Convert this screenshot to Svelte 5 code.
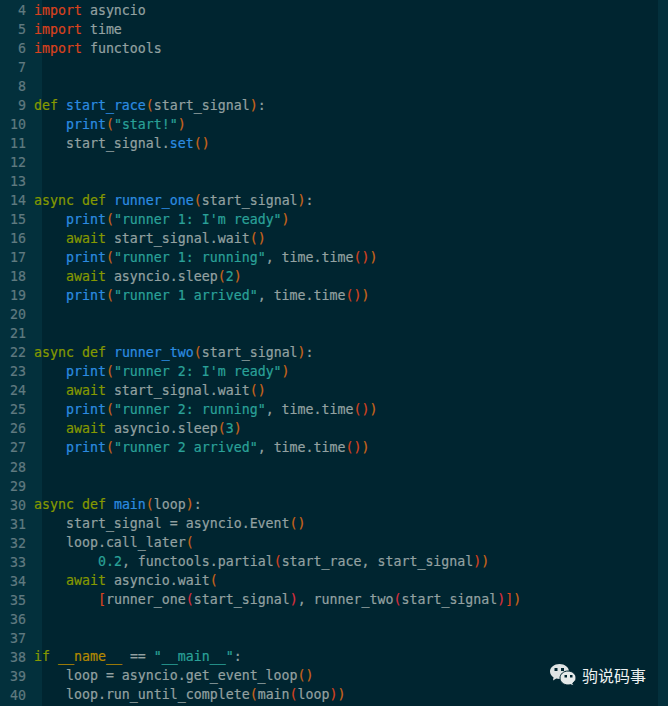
<script>
  const k = (t) => ['kw', t];
  const r = (t) => ['red', t];
  const f = (t) => ['fn', t];
  const s = (t) => ['str', t];
  const o = (t) => ['or', t];
  const rd = (t) => ['br', t];
  const c = (t) => ['cr', t];
  const p = (t) => ['pl', t];
  const y = (t) => ['yl', t];
  const w = (t) => ['pl', t];

  const src = [
    [r('import'), p(' asyncio')],
    [r('import'), p(' time')],
    [r('import'), p(' functools')],
    [],
    [],
    [k('def'), p(' '), f('start_race'), o('('), p('start_signal'), o(')'), p(':')],
    [w('    '), f('print'), o('('), s('"start!"'), o(')')],
    [w('    start_signal.'), f('set'), o('()')],
    [],
    [],
    [k('async def'), p(' '), f('runner_one'), o('('), p('start_signal'), o(')'), p(':')],
    [w('    '), f('print'), o('('), s('"runner 1: I\'m ready"'), o(')')],
    [w('    '), k('await'), p(' start_signal.wait'), o('()')],
    [w('    '), f('print'), o('('), s('"runner 1: running"'), p(', time.time'), rd('()'), o(')')],
    [w('    '), k('await'), p(' asyncio.sleep'), o('('), s('2'), o(')')],
    [w('    '), f('print'), o('('), s('"runner 1 arrived"'), p(', time.time'), rd('()'), o(')')],
    [],
    [],
    [k('async def'), p(' '), f('runner_two'), o('('), p('start_signal'), o(')'), p(':')],
    [w('    '), f('print'), o('('), s('"runner 2: I\'m ready"'), o(')')],
    [w('    '), k('await'), p(' start_signal.wait'), o('()')],
    [w('    '), f('print'), o('('), s('"runner 2: running"'), p(', time.time'), rd('()'), o(')')],
    [w('    '), k('await'), p(' asyncio.sleep'), o('('), s('3'), o(')')],
    [w('    '), f('print'), o('('), s('"runner 2 arrived"'), p(', time.time'), rd('()'), o(')')],
    [],
    [],
    [k('async def'), p(' '), f('main'), o('('), p('loop'), o(')'), p(':')],
    [w('    start_signal = asyncio.Event'), o('()')],
    [w('    loop.call_later'), o('(')],
    [w('        '), s('0.2'), p(', functools.partial'), rd('('), p('start_race, start_signal'), rd(')'), o(')')],
    [w('    '), k('await'), p(' asyncio.wait'), o('(')],
    [w('        '), rd('['), p('runner_one'), c('('), p('start_signal'), c(')'), p(', runner_two'), c('('), p('start_signal'), c(')'), rd(']'), o(')')],
    [],
    [],
    [k('if'), p(' '), y('__name__'), p(' == '), s('"__main__"'), p(':')],
    [w('    loop = asyncio.get_event_loop'), o('()')],
    [w('    loop.run_until_complete'), o('('), p('main'), rd('('), p('loop'), rd(')'), o(')')],
  ];
</script>

<div class="editor">
  <div class="gutter">
    {#each src as _, i}
      <div class="num">{i + 4}</div>
    {/each}
  </div>
  <div class="code">
    {#each src as line}
      <div class="line">{#each line as tok}<span class={tok[0]}>{tok[1]}</span>{/each}</div>
    {/each}
  </div>
  <div class="scroll"></div>
  <div class="mark">
    <svg width="26" height="22" viewBox="0 0 26 22" aria-hidden="true">
      <path d="M9.500 0C4.300 0 0 3.300 0 7.500c0 2.400 1.400 4.400 3.500 5.800L3 16.500l3.300-2c1 .3 2.100.5 3.200.5 5.200 0 9.500-3.300 9.500-7.500S14.700 0 9.500 0z" fill="#dfe4e4"/>
      <path d="M18 7c-4.400 0-8 3.100-8 7s3.600 7 8 7c.9 0 1.700-.1 2.500-.4L23.500 22l-.7-3c1.900-1.300 3.200-3 3.200-5 0-3.900-3.600-7-8-7z" fill="#e6eaea" stroke="#002530" stroke-width="1"/>
      <rect x="4.500" y="4" width="3" height="3" fill="#002530"/>
      <rect x="11" y="4" width="3" height="3" fill="#002530"/>
      <rect x="14.500" y="11" width="2.500" height="2.500" fill="#002530"/>
      <rect x="20" y="11" width="2.500" height="2.500" fill="#002530"/>
    </svg>
    <span class="brand">驹说码事</span>
  </div>
</div>

<style>
  :global(body) {
    margin: 0;
    background: #002530;
  }
  .editor {
    position: relative;
    display: flex;
    width: 668px;
    height: 706px;
    overflow: hidden;
    background: #002530;
    font-family: "DejaVu Sans Mono", monospace;
    font-size: 13.28px;
    line-height: 19.03px;
    -webkit-text-stroke: 0.2px;
  }
  .gutter {
    flex: none;
    width: 42px;
    box-sizing: border-box;
    padding: 0.75px 16px 0 0;
    background: #03303c;
    color: #607a80;
    text-align: right;
  }
  .code {
    flex: 1;
    margin-left: -8px;
    padding-top: 0.75px;
    color: #93a1a1;
    white-space: pre;
  }
  .line {
    height: 19.03px;
  }
  .scroll {
    flex: none;
    width: 10px;
    background: #03303c;
  }
  .kw { color: #859900; }
  .red { color: #d9421e; }
  .fn { color: #2c8ce0; }
  .str { color: #2aa198; }
  .or { color: #cb651a; }
  .br { color: #d6431f; }
  .cr { color: #dc2f3f; }
  .pl { color: #93a1a1; }
  .yl { color: #b58900; }
  .mark {
    position: absolute;
    right: 22px;
    bottom: 20px;
    display: flex;
    align-items: center;
    gap: 6px;
    -webkit-text-stroke: 0;
  }
  .brand {
    font-family: "Noto Sans CJK SC", sans-serif;
    font-size: 16px;
    line-height: 22px;
    color: #eef1f1;
  }
</style>
